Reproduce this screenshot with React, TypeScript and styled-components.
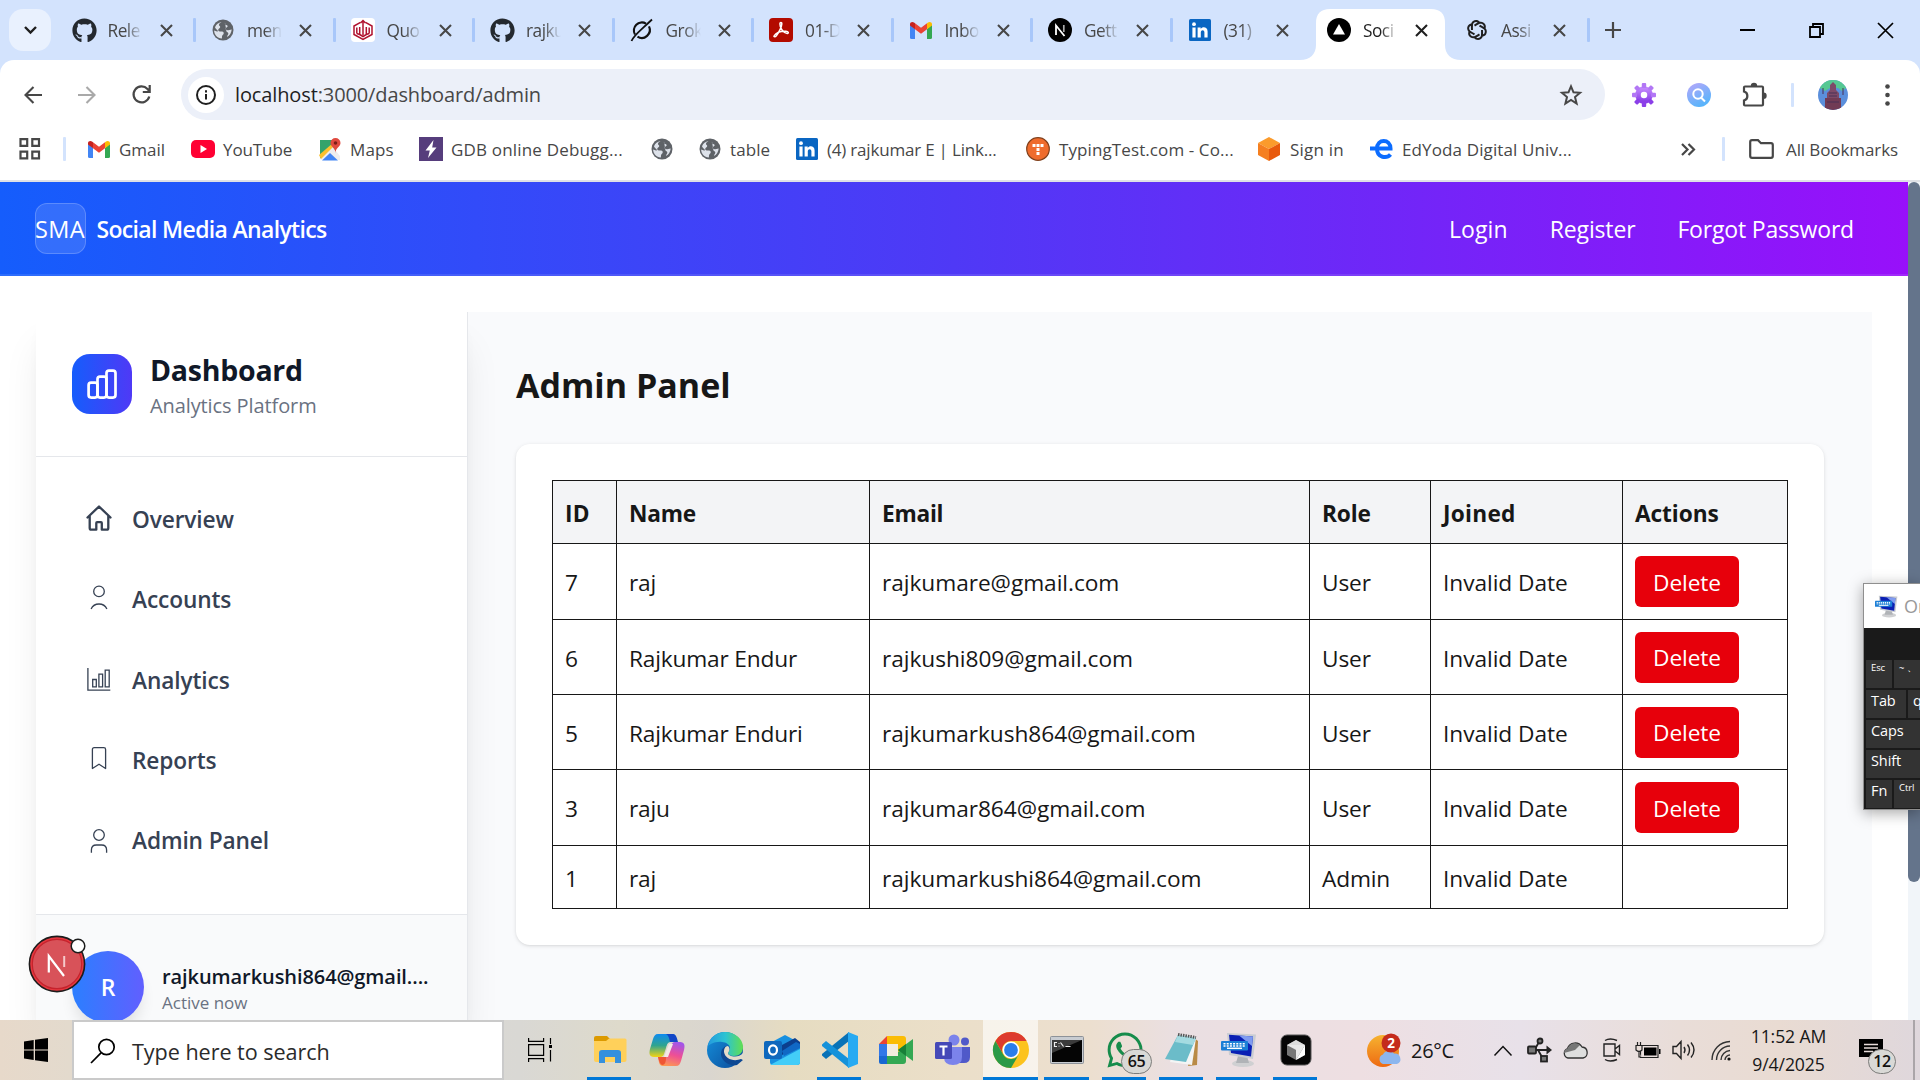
import React from "react";
import styled, { createGlobalStyle, css } from "styled-components";
import { FaGithub, FaWhatsapp } from "react-icons/fa";
import { RiOpenaiLine } from "react-icons/ri";

const GlobalStyle = createGlobalStyle`
  * { box-sizing: border-box; }
  html, body { margin: 0; padding: 0; background: #fff; overflow: hidden; }
  body { font-family: "Open Sans", "Noto Sans", sans-serif; color: #171717; }
  svg { display: block; flex: none; overflow: visible; }
`;

const Screen = styled.div`
  position: relative;
  width: 1920px;
  height: 1080px;
  display: flex;
  flex-direction: column;
  overflow: hidden;
  white-space: nowrap;
`;

/* ---------- Browser window ---------- */

const TabStrip = styled.div`
  flex: none;
  height: 60px;
  padding-left: 9px;
  display: flex;
  align-items: center;
  background: #d3e3fd;
`;

const TabSearch = styled.div`
  width: 42px;
  height: 42px;
  margin-right: 4.5px;
  border-radius: 14px;
  background: #e9f1fe;
  display: grid;
  place-items: center;
`;

const Tab = styled.div<{ $active?: boolean; $sep?: boolean }>`
  position: relative;
  width: ${(p) => (p.$active ? 138 : 139.5)}px;
  height: 60px;
  padding-left: 16px;
  display: flex;
  align-items: center;
  flex: none;
  ${(p) =>
    p.$sep &&
    css`
      &::after {
        content: "";
        position: absolute;
        right: -1px;
        top: 18px;
        width: 3px;
        height: 24px;
        border-radius: 1px;
        background: #a8c7fa;
      }
    `}
`;

const ActiveShape = styled.svg`
  position: absolute;
  left: -11px;
  top: 9px;
`;

const Favicon = styled.div`
  position: relative;
  width: 24px;
  height: 24px;
  display: grid;
  place-items: center;
`;

const TabTitle = styled.div<{ $active?: boolean }>`
  position: relative;
  width: 35px;
  margin: 2px 17px 0 12px;
  font-size: 17.3px;
  letter-spacing: -0.5px;
  line-height: 26px;
  color: ${(p) => (p.$active ? "#1f1f1f" : "#474747")};
  mask-image: linear-gradient(to right, #000 50%, transparent 100%);
`;

const CloseIcon = styled.svg`
  position: relative;
`;

const WindowButton = styled.div<{ $ml?: number }>`
  width: 24px;
  height: 24px;
  margin-left: ${(p) => p.$ml ?? 0}px;
  display: grid;
  place-items: center;
`;

const ToolbarBack = styled.div`
  flex: none;
  background: #d3e3fd;
`;

const Toolbar = styled.div`
  height: 69px;
  padding-left: 15px;
  display: flex;
  align-items: center;
  background: #fff;
  border-radius: 14px 14px 0 0;
`;

const ToolButton = styled.div<{ $w: number; $pl?: number }>`
  width: ${(p) => p.$w}px;
  height: 36px;
  flex: none;
  padding-left: ${(p) => p.$pl ?? 0}px;
  display: grid;
  place-items: center;
`;

const Omnibox = styled.div`
  flex: none;
  width: 1424px;
  height: 51px;
  margin: 0 21px 0 4px;
  padding: 0 22px 0 7px;
  border-radius: 26px;
  background: #ecf0f9;
  display: flex;
  align-items: center;
`;

const InfoBadge = styled.div`
  width: 36px;
  height: 36px;
  border-radius: 50%;
  background: #fff;
  display: grid;
  place-items: center;
`;

const Url = styled.div`
  flex: 1;
  margin-left: 11px;
  padding-bottom: 1px;
  font-size: 20px;
  letter-spacing: -0.12px;
  color: #474747;
  span { color: #1f1f1f; }
`;

const Divider = styled.div<{ $m: string }>`
  flex: none;
  width: 3px;
  height: 24px;
  margin: ${(p) => p.$m};
  border-radius: 1px;
  background: #d3e3fd;
`;

const Bookmarks = styled.div`
  flex: none;
  height: 53px;
  padding: 0 0 11px 18px;
  display: flex;
  align-items: center;
  background: #fff;
  border-bottom: 2px solid #dfe1e6;
`;

const Bookmark = styled.div<{ $w?: number; $ls?: number; $gap?: number }>`
  width: ${(p) => (p.$w ? `${p.$w}px` : "auto")};
  display: flex;
  align-items: center;
  gap: ${(p) => p.$gap ?? 9}px;
  font-size: 17px;
  letter-spacing: ${(p) => p.$ls ?? -0.1}px;
  color: #474747;
  flex: none;
`;

/* ---------- Web page ---------- */

const Viewport = styled.div`
  flex: 1;
  min-height: 0;
  display: flex;
  overflow: hidden;
`;

const Page = styled.div`
  width: 1908px;
  display: flex;
  flex-direction: column;
`;

const ScrollTrack = styled.div`
  width: 12px;
  background: #f1f5f9;
`;

const ScrollThumb = styled.div`
  height: 700px;
  border-radius: 6px;
  background: #64748b;
`;

const NavBar = styled.header`
  flex: none;
  height: 94px;
  padding: 0 54px 2px 34.5px;
  display: flex;
  align-items: center;
  color: #fff;
  font-size: 23px;
  background: linear-gradient(to right, #155dfc, #4f39f6 50%, #9810fa);
  box-shadow: inset 0 -2px 0 rgba(255, 255, 255, 0.1);
`;

const BrandMark = styled.div`
  width: 51px;
  height: 51px;
  padding-top: 2px;
  display: flex;
  align-items: center;
  justify-content: center;
  border-radius: 12px;
  border: 1.5px solid rgba(255, 255, 255, 0.2);
  background: rgba(255, 255, 255, 0.12);
  font-size: 23.500px;
  letter-spacing: 0.4px;
`;

const BrandName = styled.div`
  flex: 1;
  margin-left: 11px;
  padding-top: 2px;
  font-weight: 600;
  letter-spacing: -0.67px;
`;

const NavLink = styled.a<{ $ls: number }>`
  margin-left: 42px;
  padding-top: 2px;
  letter-spacing: ${(p) => p.$ls}px;
`;

const Columns = styled.div`
  flex: 1;
  min-height: 0;
  padding: 36px 37px 0 36px;
  display: flex;
`;

const Sidebar = styled.aside`
  position: relative;
  flex: none;
  width: 432px;
  display: flex;
  flex-direction: column;
  background: #fff;
  border-right: 1px solid #e5e7eb;
  box-shadow: 0 30px 37px -7px rgba(0, 0, 0, 0.1), 0 12px 15px -9px rgba(0, 0, 0, 0.1);
`;

const SideHeader = styled.div`
  flex: none;
  height: 145px;
  padding: 0 36px;
  display: flex;
  align-items: center;
  gap: 18px;
  border-bottom: 1px solid #e5e7eb;
`;

const LogoTile = styled.div`
  width: 60px;
  height: 60px;
  border-radius: 18px;
  background: linear-gradient(to right, #155dfc, #4f39f6);
`;

const Stack = styled.div`
  display: flex;
  flex-direction: column;
`;

const SideTitle = styled.div`
  padding-top: 2px;
  font-size: 28.5px;
  font-weight: 700;
  line-height: 40px;
  letter-spacing: -0.25px;
  color: #101828;
`;

const SideSub = styled.div`
  font-size: 20px;
  line-height: 31px;
  letter-spacing: -0.1px;
  color: #6a7282;
`;

const SideNav = styled.nav`
  flex: none;
  height: 457px;
  padding: 27px 36px 0 48px;
  display: flex;
  flex-direction: column;
  gap: 12.25px;
`;

const SideLink = styled.a`
  height: 68px;
  flex: none;
  display: flex;
  align-items: center;
  gap: 18px;
  font-size: 22.7px;
  font-weight: 600;
  letter-spacing: -0.12px;
  color: #364153;
  span { padding-top: 3px; }
`;

const Account = styled.div`
  flex: 1;
  padding: 36px 36px 0;
  display: flex;
  gap: 18px;
  background: #f9fafb;
  border-top: 1px solid #e5e7eb;
`;

const Avatar = styled.div`
  width: 72px;
  height: 72px;
  flex: none;
  border-radius: 50%;
  display: grid;
  place-items: center;
  color: #fff;
  font-size: 23px;
  font-weight: 600;
  background: linear-gradient(to right, #2b7fff, #615fff);
  box-shadow: 0 12px 16px -4px rgba(0, 0, 0, 0.12);
`;

const AccountMail = styled.div`
  margin-top: 10px;
  font-size: 20px;
  font-weight: 600;
  line-height: 31px;
  letter-spacing: -0.08px;
  color: #101828;
`;

const AccountState = styled.div`
  font-size: 17px;
  line-height: 22px;
  letter-spacing: 0;
  color: #6a7282;
`;

const Main = styled.main`
  flex: 1;
  padding: 48px;
  background: #f9fafc;
`;

const Heading = styled.h1`
  height: 84px;
  margin: 0;
  font-size: 34px;
  line-height: 51px;
  font-weight: 700;
  letter-spacing: 0;
`;

const Card = styled.section`
  height: 501px;
  padding: 36px;
  border-radius: 14px;
  background: #fff;
  box-shadow: 0 1px 4px rgba(0, 0, 0, 0.1), 0 1px 3px -1px rgba(0, 0, 0, 0.1);
`;

const Table = styled.table`
  width: 1235px;
  table-layout: fixed;
  border-collapse: collapse;
  font-size: 22.7px;
`;

const Col = styled.col<{ $w: number }>`
  width: ${(p) => p.$w}px;
`;

const Row = styled.tr<{ $h: number }>`
  height: ${(p) => p.$h}px;
`;

const cell = css<{ $ls?: number }>`
  border: 1px solid #171717;
  text-align: left;
  vertical-align: middle;
  line-height: 36px;
  letter-spacing: ${(p) => p.$ls ?? -0.05}px;
`;

const Th = styled.th<{ $ls?: number }>`
  ${cell}
  padding: 4px 0 0 12px;
  background: #f3f4f6;
  font-weight: 700;
`;

const Td = styled.td<{ $ls?: number }>`
  ${cell}
  padding: 3px 0 0 12px;
`;

const ActionCell = styled.td`
  ${cell}
  padding: 0 0 0 12px;
`;

const DeleteButton = styled.button`
  display: block;
  width: 104px;
  height: 51px;
  padding: 2px 0 0;
  border: 0;
  border-radius: 6px;
  background: #e7000b;
  color: #fff;
  font: inherit;
  letter-spacing: -0.1px;
`;

/* ---------- Floating overlays ---------- */

const DevBadge = styled.svg`
  position: absolute;
  left: 27px;
  top: 932px;
`;

const Keyboard = styled.div`
  position: absolute;
  left: 1863px;
  top: 583px;
  width: 57px;
  height: 227px;
  border: 1px solid #8f8f8f;
  border-right: 0;
  background: #1a1a1a;
  box-shadow: 0 3px 14px rgba(0, 0, 0, 0.35);
`;

const KeyTitle = styled.div`
  height: 44px;
  padding-left: 11px;
  display: flex;
  align-items: center;
  gap: 6px;
  background: #fff;
  color: #999;
  font-size: 18px;
  overflow: hidden;
`;

const KeyRows = styled.div`
  padding: 32px 0 0 2px;
  display: grid;
  gap: 2px;
`;

const KeyRow = styled.div`
  display: flex;
  gap: 2px;
  height: 28px;
`;

const Key = styled.div<{ $w?: number; $small?: boolean }>`
  ${(p) => (p.$w ? `width: ${p.$w}px; flex: none;` : "flex: 1;")}
  padding-left: 5px;
  background: #333;
  color: #fff;
  font-size: ${(p) => (p.$small ? 9.5 : 14.5)}px;
  line-height: ${(p) => (p.$small ? 15 : 22)}px;
  letter-spacing: -0.1px;
`;

/* ---------- Taskbar ---------- */

const Taskbar = styled.footer`
  flex: none;
  position: relative;
  height: 60px;
  display: flex;
  align-items: stretch;
  background: linear-gradient(
    to right,
    #e7d9ca 0,
    #e3dacd 70px,
    #d9d8d4 520px,
    #dedacb 620px,
    #dad6cf 710px,
    #e6dcc1 790px,
    #ebdfc9 950px,
    #ecdfcf 1090px,
    #eadfe2 1180px,
    #eedfe2 1360px,
    #e8e1e9 1520px,
    #e9ddd8 1680px,
    #e9dbd2 1780px,
    #dfd7dc 1920px
  );
`;

const Start = styled.div`
  width: 72px;
  display: grid;
  place-items: center;
`;

const SearchBox = styled.div`
  width: 432px;
  padding: 2px 0 0 16px;
  display: flex;
  align-items: center;
  gap: 16px;
  border: 2px solid #cacaca;
  background: #fff;
  font-size: 21.6px;
  letter-spacing: -0.05px;
  color: #2b2b2b;
`;

const Slot = styled.div<{ $w: number; $run?: boolean; $on?: boolean; $pr?: number }>`
  position: relative;
  width: ${(p) => p.$w}px;
  flex: none;
  padding-right: ${(p) => p.$pr ?? 0}px;
  display: grid;
  place-items: center;
  background: ${(p) => (p.$on ? "rgba(255,255,255,.62)" : "transparent")};
  ${(p) =>
    p.$run &&
    css`
      &::after {
        content: "";
        position: absolute;
        left: ${p.$on ? 0 : 6}px;
        right: ${p.$on ? 0 : 7}px;
        bottom: 0;
        height: 3px;
        background: #0078d7;
      }
    `}
`;

const CountBadge = styled.div<{ $x: number; $w: number }>`
  position: absolute;
  left: ${(p) => p.$x}px;
  top: 29px;
  width: ${(p) => p.$w}px;
  height: 25px;
  border-radius: 13px;
  border: 1.5px solid #7c7c7a;
  background: #d9d9d6;
  color: #111;
  font-size: 16px;
  font-weight: 600;
  line-height: 22px;
  text-align: center;
  letter-spacing: -0.3px;
`;

const Temperature = styled.div`
  width: 80px;
  padding: 1px 0 0 7px;
  align-self: center;
  font-size: 20px;
  letter-spacing: -0.3px;
`;

const Clock = styled.div`
  width: 94px;
  display: flex;
  flex-direction: column;
  align-items: center;
  justify-content: center;
  font-size: 17.6px;
  line-height: 27.5px;
  letter-spacing: -0.1px;
  padding: 1px 0 0 3px;
`;

const DesktopEdge = styled.div`
  width: 2px;
  margin-left: auto;
  margin-right: 5px;
  background: #aaa5a8;
`;

/* ---------- Drawings ---------- */

const Globe = () => (
  <svg width="22" height="22" viewBox="0 0 22 22">
    <circle cx="11" cy="11" r="10.5" fill="#5f6368" />
    <path d="M11.500 2.500C10.500 4 9.500 4 9.500 5.300c0 1.400 2.200.9 2.200 2.200 0 1-1.200 1.200-2.700 1.300-1 .1-1 1.500.2 1.700 1.700.3 3.800-.1 4.600 1.200.8 1.600-.2 2.700-1.500 3.500-.9.700-.4 2.300-1.900 3.900C6 18.900 2.600 15.500 2.400 11c1.400 1.400 2.700 1.900 4.600 2.200 1.500.2 1.300-1.200.5-1.900C6.200 10.300 4.600 9.800 3.100 8 4.400 4.700 7.600 2.500 11.500 2.500z" fill="#5f6368" />
    <path d="M13.500 3C12 4.500 11 4.200 11 5.500c0 1.300 2 1 2 2.500 0 1.300-1.800 1.300-3 1.400-.8.100 3.700-.2 5 1.600 1 1.500 0 3.200-1.200 4-.9.600-.6 2.600-1.600 4.200 4-.7 7.200-4 7.200-8.200 0-3.700-2.400-6.800-5.900-8z" fill="#5f6368" />
    <path d="M9.500 3c-1 1.200-2.700 1.300-2.500 3 .1 1.200 1.400.9 1.200 2.200-.2 1.400-2 1.300-2 2.800 0 1.300 1.300 1.500 2.700 1.600 1.700.1 2.900.2 2.800 1.800-.1 1.300-1.500 1.300-1.700 2.800-.1.900.1 1.500-.2 2.200C5.300 19 2.200 15.700 2.100 11.400L5 12.500c1.200.3 1-1 .2-1.600C4.400 10.300 3.500 9.500 3 8.200 4 5.500 6.500 3.500 9.500 3zM13 3.500c-.5 1.500.5 2.300 1.800 2.800 1.600.6.700 1.700-.3 2.200-1.300.7-1.200 2.200.3 2.600 1.500.3 2.800-.5 4.900-.7-.3 3.300-2 6-4.700 7.500.2-1.500 1.500-2.200 1.300-3.600-.2-1.300-1.700-1-1.900-2" fill="#e8edf5" opacity=".92" />
  </svg>
);

const Gmail = () => (
  <svg width="22" height="17" viewBox="0 0 22 17">
    <path d="M0 2.500V15.500Q0 17 1.500 17H5V7z" fill="#4285f4" />
    <path d="M22 2.500V15.500Q22 17 20.500 17H17V7z" fill="#34a853" />
    <path d="M17 1.200V7.200l5-3.700V2.300C22 .2 19.600-.7 18 .5z" fill="#fbbc04" />
    <path d="M5 7.300V1.200l6 4.600 6-4.600v6.100l-6 4.500z" fill="#ea4335" />
    <path d="M0 2.300V3.600l5 3.700V1.200L4 .5C2.400-.7 0 .2 0 2.300z" fill="#c5221f" />
  </svg>
);

const LinkedIn = () => (
  <svg width="22" height="22" viewBox="0 0 22 22">
    <rect width="22" height="22" rx="1.500" fill="#0a66c2" />
    <circle cx="5" cy="5.200" r="1.900" fill="#fff" />
    <path d="M3.400 8.500h3.200v10H3.400zM8.600 8.500h3.100v1.400c1.500-2.500 6.900-2.400 6.900 2.700v5.900h-3.200v-5.200c0-3-3.600-2.600-3.600 0v5.200H8.600z" fill="#fff" />
  </svg>
);

const Wings = () => (
  <svg width="24" height="24" viewBox="0 0 24 24">
    <rect width="24" height="24" rx="4" fill="#fff" />
    <g fill="none" stroke="#b0122f" strokeWidth="1.500">
      <path d="M9.500 4.300 3 8v8.500l9 5 9-5V8l-6.500-3.700" />
      <path d="M12 2.500V17M8.700 9v7.500M15.300 9v7.500M5.800 9.500v6M18.200 9.500v6M5.800 15.500l2.900 1M8.700 16.500l3.300 2 3.300-2 2.900-1M9.500 5 12 2.500 14.500 5" />
    </g>
  </svg>
);

const Grok = () => (
  <svg width="24" height="24" viewBox="0 0 24 24" fill="none" stroke="#111" strokeWidth="2.200">
    <path d="M16 5.600A8 8 0 0 0 5 16.500M7.500 18.600A8 8 0 0 0 19 8.400" />
    <path d="M1.500 23C4 17 9 14 22 1.500" strokeWidth="1.800" />
  </svg>
);

const Acrobat = () => (
  <svg width="24" height="24" viewBox="0 0 24 24">
    <rect width="24" height="24" rx="4" fill="#b30b00" />
    <path d="M5 18c2-3.500 5.500-5 12-4.800 2.500.1 3 2 1.300 2.200-3 .1-7.600-4.600-7.400-9.500.1-2 2-2 1.900 0C12.500 9.500 10 14 7.500 17.600 6.300 19.300 4.600 19 5 18z" fill="none" stroke="#fff" strokeWidth="1.500" />
  </svg>
);

const NextIcon = () => (
  <svg width="24" height="24" viewBox="0 0 24 24">
    <circle cx="12" cy="12" r="12" fill="#000" />
    <path d="M8 17V7.500L16.500 18" stroke="#fff" strokeWidth="1.800" fill="none" />
    <path d="M15.800 7v7" stroke="#aaa" strokeWidth="1.700" />
  </svg>
);

const VercelIcon = () => (
  <svg width="24" height="24" viewBox="0 0 24 24">
    <circle cx="12" cy="12" r="12" fill="#000" />
    <path d="M12 6 18 16.500H6z" fill="#fff" />
  </svg>
);

const Cross = ({ active }: { active?: boolean }) => (
  <CloseIcon width="13" height="13" viewBox="0 0 13 13" stroke={active ? "#1f1f1f" : "#474747"} strokeWidth="2.100">
    <path d="M1 1 12 12M12 1 1 12" />
  </CloseIcon>
);

const Monitor = ({ size }: { size: number }) => (
  <svg width={size} height={size} viewBox="0 0 36 36">
    <ellipse cx="22" cy="31.500" rx="11" ry="3.600" fill="#cfd0d2" />
    <path d="M17 24h9l2 7H15z" fill="#b0b3b7" />
    <path d="M6 1 35 2.500 32 27 8 23z" fill="#c9ccd2" />
    <path d="M8 2.700 32 4.500 30 24.500 10 21z" fill="#0a1fb4" />
    <path d="M18 3.500 32 4.500 31 14z" fill="#7f9bf0" />
    <rect x="0" y="9" width="27" height="9.500" rx="1" fill="#1c7fd6" />
    <path d="M2.500 11.700h22M2.500 13.900h22" stroke="#fff" strokeWidth="1.500" strokeDasharray="2 1.200" />
    <path d="M6 16.300h15" stroke="#fff" strokeWidth="1.400" />
  </svg>
);

const sideIcons: Record<string, React.ReactNode> = {
  home: (
    <g strokeWidth="2.300" strokeLinecap="round" strokeLinejoin="round">
      <path d="M3.500 14.500 15 3.500 26.500 14.500M5.700 12.800V25q0 1.700 1.700 1.700H12.300V20q0-.8.8-.8H17q.8 0 .8.8v6.700H22.700Q24.300 26.700 24.300 25V12.800" />
    </g>
  ),
  person: (
    <g strokeWidth="1.300">
      <circle cx="15" cy="8.400" r="5.300" />
      <path d="M7.100 26C8.700 22.500 11.500 21 15 21s6.300 1.500 7.900 5" />
    </g>
  ),
  chart: (
    <g strokeWidth="1.300">
      <path d="M3.900 4v22.200H26.300" />
      <path d="M8.700 15.500h3.600v7.300H8.700zM14.900 10.200h3.700v12.600h-3.700zM21.200 6.200h4v16.600h-4z" />
    </g>
  ),
  bookmark: (
    <g strokeWidth="1.300" strokeLinejoin="round">
      <path d="M8.400 24.500V5.500Q8.400 3.700 10.200 3.700h9.600q1.800 0 1.800 1.800v19L15 20.200z" />
    </g>
  ),
  admin: (
    <g strokeWidth="1.300">
      <circle cx="15" cy="11" r="5.300" />
      <path d="M7.400 28.700V26q0-5 5-5h5.200q5 0 5 5v2.700" />
    </g>
  ),
};

/* ---------- Data ---------- */

const tabs: { title: string; icon: React.ReactNode; active?: boolean; sep?: boolean }[] = [
  { title: "Rele", icon: <FaGithub size={25} color="#24292f" />, sep: true },
  { title: "men", icon: <Globe />, sep: true },
  { title: "Quo", icon: <Wings />, sep: true },
  { title: "rajku", icon: <FaGithub size={25} color="#24292f" />, sep: true },
  { title: "Grok", icon: <Grok />, sep: true },
  { title: "01-D", icon: <Acrobat />, sep: true },
  { title: "Inbo", icon: <Gmail />, sep: true },
  { title: "Gett", icon: <NextIcon />, sep: true },
  { title: "(31)", icon: <LinkedIn /> },
  { title: "Soci", icon: <VercelIcon />, active: true },
  { title: "Assi", icon: <RiOpenaiLine size={24} color="#1f1f1f" />, sep: true },
];

const links = [
  ["home", "Overview"],
  ["person", "Accounts"],
  ["chart", "Analytics"],
  ["bookmark", "Reports"],
  ["admin", "Admin Panel"],
];

const headers: [string, number][] = [
  ["ID", 0.3],
  ["Name", -0.25],
  ["Email", -0.25],
  ["Role", -0.15],
  ["Joined", 0.25],
  ["Actions", -0.1],
];

const users = [
  { id: 7, name: "raj", email: "rajkumare@gmail.com", role: "User", h: 76 },
  { id: 6, name: "Rajkumar Endur", email: "rajkushi809@gmail.com", role: "User", h: 75 },
  { id: 5, name: "Rajkumar Enduri", email: "rajkumarkush864@gmail.com", role: "User", h: 75 },
  { id: 3, name: "raju", email: "rajkumar864@gmail.com", role: "User", h: 76 },
  { id: 1, name: "raj", email: "rajkumarkushi864@gmail.com", role: "Admin", h: 63 },
];

const Browser = () => (
  <>
    <TabStrip>
      <TabSearch>
        <svg width="13" height="8" viewBox="0 0 13 8" fill="none" stroke="#1f1f1f" strokeWidth="2.400"><path d="M1 1l5.500 5.500L12 1" /></svg>
      </TabSearch>
      {tabs.map((t, i) => (
        <Tab key={i} $active={t.active} $sep={t.sep}>
          {t.active && (
            <ActiveShape width="161" height="51" viewBox="0 0 161 51" fill="#fff">
              <path d="M0 51C10 51 16 45 16 36V14Q16 0 30 0H131Q145 0 145 14V36C145 45 151 51 161 51z" />
            </ActiveShape>
          )}
          <Favicon>{t.icon}</Favicon>
          <TabTitle $active={t.active}>{t.title}</TabTitle>
          <Cross active={t.active} />
        </Tab>
      ))}
      <WindowButton $ml={12}>
        <svg width="16" height="16" viewBox="0 0 16 16" stroke="#474747" strokeWidth="2.200"><path d="M8 0v16M0 8h16" /></svg>
      </WindowButton>
      <WindowButton $ml={111}>
        <svg width="15" height="2" viewBox="0 0 15 2"><path d="M0 0h15v2H0z" /></svg>
      </WindowButton>
      <WindowButton $ml={45}>
        <svg width="15" height="15" viewBox="0 0 15 15" fill="none" stroke="#000" strokeWidth="1.800"><path d="M1 4h10v10H1zM4 4V1h10v10h-3" /></svg>
      </WindowButton>
      <WindowButton $ml={45}>
        <svg width="15" height="15" viewBox="0 0 15 15" stroke="#000" strokeWidth="1.700"><path d="M0 0 15 15M15 0 0 15" /></svg>
      </WindowButton>
    </TabStrip>
    <ToolbarBack>
      <Toolbar>
        <ToolButton $w={36}>
          <svg width="18" height="18" viewBox="0 0 18 18" fill="none" stroke="#474747" strokeWidth="2.100"><path d="M18 9H1.500M9.500 1 1.500 9l8 8" /></svg>
        </ToolButton>
        <ToolButton $w={72}>
          <svg width="18" height="18" viewBox="0 0 18 18" fill="none" stroke="#a9a9a9" strokeWidth="2.100"><path d="M0 9h16.500M8.500 1l8 8-8 8" /></svg>
        </ToolButton>
        <ToolButton $w={36}>
          <svg width="19" height="19" viewBox="0 0 19 19" fill="none" stroke="#474747" strokeWidth="2.200"><path d="M17.300 11.500A8 8 0 1 1 15.500 4L17.500 6.200M17.700 0v7H10.800" /></svg>
        </ToolButton>
        <ToolButton $w={18} />
        <Omnibox>
          <InfoBadge>
            <svg width="20" height="20" viewBox="0 0 20 20" fill="none" stroke="#1f1f1f" strokeWidth="2"><circle cx="10" cy="10" r="9" /><path d="M10 9v5.500M10 5.200v2.200" /></svg>
          </InfoBadge>
          <Url><span>localhost</span>:3000/dashboard/admin</Url>
          <svg width="24" height="24" viewBox="0 0 24 24" fill="none" stroke="#474747" strokeWidth="2"><path d="M12 3.300 14.500 9.300 21 9.800 16 14 17.600 20.500 12 17 6.400 20.500 8 14 3 9.800 9.500 9.300z" /></svg>
        </Omnibox>
        <ToolButton $w={36}>
          <svg width="24" height="24" viewBox="-12 -12 24 24">
            <defs><linearGradient id="gear" x1="0" y1="0" x2="0" y2="1"><stop offset="0" stopColor="#c084fc" /><stop offset="1" stopColor="#8b3fe8" /></linearGradient></defs>
            <circle r="6" fill="none" stroke="url(#gear)" strokeWidth="5.500" />
            {[0, 45, 90, 135, 180, 225, 270, 315].map((a) => <rect key={a} x="-2.200" y="-12" width="4.400" height="5" rx="1" fill={a > 90 && a < 270 ? "#8b3fe8" : "#b277f5"} transform={`rotate(${a})`} />)}
          </svg>
        </ToolButton>
        <ToolButton $w={74}>
          <svg width="24" height="24" viewBox="0 0 24 24">
            <defs><linearGradient id="find" x1="0" y1="0" x2=".5" y2="1"><stop offset="0" stopColor="#b9a7fa" /><stop offset="1" stopColor="#58b4fb" /></linearGradient></defs>
            <circle cx="12" cy="12" r="12" fill="url(#find)" />
            <circle cx="11" cy="11" r="4.700" fill="none" stroke="#fff" strokeWidth="2" /><path d="m13.500 14 4.500 4.500" stroke="#fff" strokeWidth="2" />
          </svg>
        </ToolButton>
        <ToolButton $w={36}>
          <svg width="25" height="25" viewBox="0 0 25 25" fill="none" stroke="#474747" strokeWidth="2.200"><path d="M2 5.500Q2 4.500 3 4.500H20Q21 4.500 21 5.500V22.500Q21 23.500 20 23.500H3Q2 23.500 2 22.500V18.500C6.500 17.500 6.500 10.500 2 9.500z" /><path d="M8.800 4a3.200 3.200 0 0 1 6.400 0zM21.500 10.500a3.200 3.200 0 0 1 0 6.400z" fill="#474747" stroke="none" /></svg>
        </ToolButton>
        <Divider $m="0 24px 0 19px" />
        <svg width="30" height="30" viewBox="0 0 30 30">
          <defs><clipPath id="me"><circle cx="15" cy="15" r="15" /></clipPath></defs>
          <g clipPath="url(#me)">
            <path fill="#5b8fdc" d="M0 0h30v30H0z" />
            <path fill="#55c893" d="M2 0h26v8l-4 3-4-3h-8l-5 3-5-3z" />
            <path fill="#7d4a68" d="M12 5l3-3 3 3v5l3 3v6H9v-6l3-3z" />
            <path fill="#713b55" d="M7 18h16v12H7z" />
            <path d="M11 13h8M11 16h8M9 22h12M5 8v6M25 8v7" stroke="#4a3157" />
          </g>
        </svg>
        <ToolButton $w={72} $pl={6}>
          <svg width="5" height="22" viewBox="0 0 5 22" fill="#474747"><circle cx="2.500" cy="2.500" r="2.300" /><circle cx="2.500" cy="11" r="2.300" /><circle cx="2.500" cy="19.500" r="2.300" /></svg>
        </ToolButton>
      </Toolbar>
    </ToolbarBack>
    <Bookmarks>
      <svg width="24" height="22" viewBox="0 0 24 22" fill="none" stroke="#474747" strokeWidth="2.200"><path d="M2.500 1.200h6.700v6.700H2.500zM14.300 1.200H21v6.700h-6.700zM2.500 13.600h6.700v6.700H2.500zM14.300 13.600H21v6.700h-6.700z" /></svg>
      <Divider $m="0 22px 0 21px" />
      <Bookmark $w={103} $ls={0}><Gmail />Gmail</Bookmark>
      <Bookmark $w={127} $gap={8}>
        <svg width="24" height="18" viewBox="0 0 24 18"><rect width="24" height="18" rx="5" fill="#f03" /><path d="M9.500 5v8l6.500-4z" fill="#fff" /></svg>
        YouTube
      </Bookmark>
      <Bookmark $w={101} $ls={0.1}>
        <svg width="23" height="23" viewBox="0 0 23 23">
          <path d="M2 2h16v19H4q-2 0-2-2z" fill="#34a36b" /><path d="M2 21 14 8l8 10v4H4z" fill="#eee" /><path d="M4 22.500 12 15l8 7.500z" fill="#4285f4" /><path d="M1 17 15 5v4L3 21z" fill="#fbc02d" />
          <path d="M17.500 0a5 5 0 0 1 5 5c0 4-5 4.500-5 10 0-5.500-5-6-5-10a5 5 0 0 1 5-5z" fill="#e04a3f" /><circle cx="17.500" cy="5" r="1.800" fill="#7c1f18" />
        </svg>
        Maps
      </Bookmark>
      <Bookmark $w={232} $ls={0.18} $gap={8}>
        <svg width="24" height="24" viewBox="0 0 24 24"><path d="M0 0h24v24H0z" fill="#563d7c" /><path d="M14.500 3 6.500 13.500h4.300L9 21l8.500-10.500h-4.300z" fill="#fff" /></svg>
        GDB online Debugg...
      </Bookmark>
      <Bookmark $w={48}><Globe /></Bookmark>
      <Bookmark $w={97} $ls={0.1}><Globe />table</Bookmark>
      <Bookmark $w={230} $ls={-0.2}><LinkedIn />(4) rajkumar E | Link...</Bookmark>
      <Bookmark $w={231} $ls={0.1}>
        <svg width="24" height="24" viewBox="0 0 24 24"><circle cx="12" cy="12" r="11.300" fill="#ef6c2d" stroke="#80401c" strokeWidth="1.200" /><path d="M6.500 7h3v3h-3zM10.500 7h3v3h-3zM14.500 7h3v3h-3zM10.500 11h3v3h-3zM10.500 15h3v3h-3z" fill="#fff" /></svg>
        TypingTest.com - Co...
      </Bookmark>
      <Bookmark $w={113} $ls={0.2}>
        <svg width="24" height="24" viewBox="0 0 24 24"><path d="M12 0 23 6 12 12 1 6z" fill="#fb9b2c" /><path d="M1 6 12 12V24L1 18z" fill="#f57f20" /><path d="M23 6 12 12V24l11-6z" fill="#e8590c" /></svg>
        Sign in
      </Bookmark>
      <Bookmark $w={311} $ls={0.12}>
        <svg width="23" height="20" viewBox="0 0 23 20" fill="none" stroke="#0b6cff" strokeWidth="4"><path d="M0 9.500H20.500C20.500 -.5 7 -.5 7 9.500 7 19.500 17 19.500 20.500 15.500" /></svg>
        EdYoda Digital Univ...
      </Bookmark>
      <svg width="14" height="13" viewBox="0 0 14 13" fill="none" stroke="#474747" strokeWidth="2.200"><path d="M1 1l5.500 5.500L1 12M7.500 1 13 6.500 7.500 12" /></svg>
      <Divider $m="0 24px 0 27px" />
      <Bookmark $gap={12}>
        <svg width="25" height="20" viewBox="0 0 25 20" fill="none" stroke="#474747" strokeWidth="2.200"><path d="M1.200 3Q1.200 1.200 3 1.200H9L12 4.200H22Q23.800 4.200 23.800 6V17Q23.800 18.800 22 18.800H3Q1.200 18.800 1.200 17z" /></svg>
        <span>All Bookmarks</span>
      </Bookmark>
    </Bookmarks>
  </>
);

const Dashboard = () => (
  <Viewport>
    <Page>
      <NavBar>
        <BrandMark>SMA</BrandMark>
        <BrandName>Social Media Analytics</BrandName>
        <NavLink $ls={0.1}>Login</NavLink>
        <NavLink $ls={-0.15}>Register</NavLink>
        <NavLink $ls={-0.18}>Forgot Password</NavLink>
      </NavBar>
      <Columns>
        <Sidebar>
          <SideHeader>
            <LogoTile>
              <svg width="60" height="60" viewBox="0 0 60 60" fill="none" stroke="#fff" strokeWidth="2.700">
                <rect x="16.600" y="28.600" width="8.900" height="15" rx="2.500" />
                <rect x="25.500" y="22.600" width="9" height="21" rx="2.500" />
                <rect x="34.500" y="16.600" width="9" height="27" rx="2.500" />
              </svg>
            </LogoTile>
            <Stack>
              <SideTitle>Dashboard</SideTitle>
              <SideSub>Analytics Platform</SideSub>
            </Stack>
          </SideHeader>
          <SideNav>
            {links.map(([icon, label]) => (
              <SideLink key={label}>
                <svg width="30" height="30" viewBox="0 0 30 30" fill="none" stroke="#364153">{sideIcons[icon]}</svg>
                <span>{label}</span>
              </SideLink>
            ))}
          </SideNav>
          <Account>
            <Avatar>R</Avatar>
            <Stack>
              <AccountMail>rajkumarkushi864@gmail....</AccountMail>
              <AccountState>Active now</AccountState>
            </Stack>
          </Account>
        </Sidebar>
        <Main>
          <Heading>Admin Panel</Heading>
          <Card>
            <Table>
              <colgroup>
                {[64, 253, 440, 121, 192, 165].map((w, i) => <Col key={i} $w={w} />)}
              </colgroup>
              <thead>
                <Row $h={63}>
                  {headers.map(([h, ls]) => <Th key={h} $ls={ls}>{h}</Th>)}
                </Row>
              </thead>
              <tbody>
                {users.map((u) => (
                  <Row key={u.id} $h={u.h}>
                    <Td>{u.id}</Td>
                    <Td $ls={-0.18}>{u.name}</Td>
                    <Td>{u.email}</Td>
                    <Td $ls={-0.15}>{u.role}</Td>
                    <Td>Invalid Date</Td>
                    <ActionCell>{u.role === "User" && <DeleteButton>Delete</DeleteButton>}</ActionCell>
                  </Row>
                ))}
              </tbody>
            </Table>
          </Card>
        </Main>
      </Columns>
    </Page>
    <ScrollTrack><ScrollThumb /></ScrollTrack>
  </Viewport>
);

const WindowsTaskbar = () => (
  <Taskbar>
    <Start>
      <svg width="24" height="24" viewBox="0 0 24 24"><path d="M0 3.400 9.700 2v9.400H0zM11 1.800 24 0v11.400H11zM0 12.600h9.700V22L0 20.600zM11 12.600h13V24L11 22.200z" /></svg>
    </Start>
    <SearchBox>
      <svg width="26" height="26" viewBox="0 0 26 26" fill="none" stroke="#000" strokeWidth="1.700"><circle cx="16.500" cy="9" r="7.700" /><path d="M11 14.800 1 25" /></svg>
      Type here to search
    </SearchBox>
    <Slot $w={77} $pr={4}>
      <svg width="25" height="24" viewBox="0 0 25 24" fill="none" stroke="#000" strokeWidth="1.200"><path d="M.6 0v3.400h15V0M.6 6.600h15v10.800H.6zM.6 24v-3.400h15V24M22.500 0v6M22.500 12v11.500" /><path d="M21 7h3v3h-3z" fill="#000" stroke="none" /></svg>
    </Slot>
    <Slot $w={57} $run>
      <svg width="34" height="30" viewBox="0 0 34 30"><path d="M1 3Q1 1 3 1h11l3 3-3 3H1z" fill="#dc9a00" /><path d="M1 6h12l3-2.500h16q1.500 0 1.500 1.500v20q0 2-2 2H3q-2 0-2-2z" fill="#ffd05a" /><path d="M6 28V18q0-3 3-3h16q3 0 3 3v10h-6v-6h-10v6z" fill="#3590dd" /></svg>
    </Slot>
    <Slot $w={58}>
      <svg width="36" height="34" viewBox="0 0 36 34">
        <defs>
          <linearGradient id="cpA" x1="0" y1="0" x2="0" y2="1"><stop offset="0" stopColor="#0e8bf0" /><stop offset=".5" stopColor="#2fa48f" /><stop offset="1" stopColor="#f5d413" /></linearGradient>
          <linearGradient id="cpB" x1=".6" y1="0" x2=".3" y2="1"><stop offset="0" stopColor="#a355e8" /><stop offset=".5" stopColor="#ee4f95" /><stop offset="1" stopColor="#fd9a52" /></linearGradient>
        </defs>
        <path d="M9 1h14c4 0 4 3 5 8h-6c-3 0-4 2-5 6l-2 6c-1 3-3 3-5 3H5c-5 0-5-4-4-8L4 6c1-3 2-5 5-5z" fill="url(#cpA)" />
        <path d="M17 1h7c3 0 4 4 5 8h-8c-1-5-2-7-4-8z" fill="#1146c7" />
        <path d="M27 33H14c-4 0-4-4-5-9h5c4 0 5-2 6-5l2-6c1-3 2-4 4-4h5c5 0 5 4 4 8l-3 11c-1 3-2 5-5 5z" fill="url(#cpB)" />
        <path d="M9 24h8c0 5-1 8-4 8-2-1-3-4-4-8z" fill="#ef5634" />
        <path d="M20 11h4l-5 13h-4z" fill="#f4e8e6" />
      </svg>
    </Slot>
    <Slot $w={57}>
      <svg width="36" height="36" viewBox="0 0 36 36">
        <defs>
          <linearGradient id="edA"><stop offset="0" stopColor="#249bdf" /><stop offset=".5" stopColor="#2cc3d2" /><stop offset="1" stopColor="#62df50" /></linearGradient>
          <linearGradient id="edB" x1="0" y1="0" x2="1" y2=".8"><stop offset="0" stopColor="#1591dc" /><stop offset="1" stopColor="#0c4f9e" /></linearGradient>
        </defs>
        <circle cx="18" cy="18" r="18" fill="url(#edB)" />
        <path d="M1 14C3 5 10 0 18 0c10 0 18 7 18 15 0 6-4 9-9 9-4 0-6-1.500-6-3 0-1 2-2 2-5 0-3-4-6-8-6C8 9 2 13 1 14z" fill="url(#edA)" />
        <path d="M21 21c0 2 3 4 7 4 3 0 5-1 6.500-2L36 28 30 33c-5 1-12-1-15-7-2-4-1-10 4-12 2 1 4 3 2 7z" fill="#0d4893" />
        <path d="M21 14c2 2 2 4 0 7 0 2 3 3.500 7 3.500 3 0 5.500-.8 8-3.500v7l-2-1c-7 3-16 0-17-7 0-3 1-6 4-6z" fill="#e3dbc9" />
      </svg>
    </Slot>
    <Slot $w={58}>
      <svg width="36" height="32" viewBox="0 0 36 32"><path d="M6 9 21 1 36 9v19q0 3-3 3H9q-3 0-3-3z" fill="#1890e0" /><path d="M18 11 31 4l5 4v4L18 21z" fill="#0c3f8e" /><path d="M18 17 32 8l4 2v4L20 22z" fill="#1068c5" /><path d="M6 31 36 15v13q0 3-3 3z" fill="#43cdf8" /><rect y="7" width="18" height="18" rx="2" fill="#0f68bd" /><ellipse cx="9" cy="16" rx="4" ry="4.600" fill="none" stroke="#fff" strokeWidth="2.200" /></svg>
    </Slot>
    <Slot $w={57} $run>
      <svg width="36" height="36" viewBox="0 0 36 36"><path d="M27 0v9L4 27 0 23.500V22z" fill="#0872b7" /><path d="M27 36v-9L4 9 0 12.500V14z" fill="#1592da" /><path d="M26 0 36 4v28l-10 4z" fill="#27aaf2" /></svg>
    </Slot>
    <Slot $w={57} $pr={1}>
      <svg width="34" height="28" viewBox="0 0 34 28"><path d="M0 8h8v12H0z" fill="#3277e8" /><path d="M8 0v8H0z" fill="#ea4335" /><path d="M8 0h16q3 0 3 3v10l-8 3V8H8z" fill="#fbbc04" /><path d="M0 20h8v8H2q-2 0-2-2z" fill="#1967d2" /><path d="M8 20h11v-4l8-4v13q0 3-3 3H8z" fill="#34a853" /><path d="M8 8h11v12H8z" fill="#f2ecdf" /><path d="M19 14 34 3v22z" fill="#34a853" /><path d="M19 14 27 8v12z" fill="#188038" /></svg>
    </Slot>
    <Slot $w={58} $pr={3}>
      <svg width="36" height="32" viewBox="0 0 36 32"><circle cx="19" cy="6" r="5.500" fill="#7b83eb" /><circle cx="30" cy="7.500" r="4" fill="#5059c9" /><path d="M23 13h12v10q0 6-6 6h-6z" fill="#5059c9" /><path d="M9 13h18v10q0 8-9 8t-9-8z" fill="#7b83eb" /><rect y="8" width="17" height="17" rx="1.500" fill="#4549b8" /><path d="M4.500 12.500h8M8.500 12.500v9" stroke="#fff" strokeWidth="2.200" /></svg>
    </Slot>
    <Slot $w={55} $run $on>
      <svg width="36" height="36" viewBox="0 0 36 36"><circle cx="18" cy="18" r="18" fill="#fcc31e" /><path d="M2.400 9A18 18 0 0 1 33.600 9H18a9 9 0 0 0-8 13z" fill="#dd3a2e" /><path d="M2.400 9A18 18 0 0 0 18 36l7.800-13.500A9 9 0 0 1 10.200 22.500z" fill="#2a9a48" /><circle cx="18" cy="18" r="8.500" fill="#fff" /><circle cx="18" cy="18" r="6.900" fill="#2b7de9" /></svg>
    </Slot>
    <Slot $w={58} $run>
      <svg width="34" height="28" viewBox="0 0 34 28"><rect x=".5" y=".5" width="33" height="27" rx="1" fill="#c8ccd1" stroke="#8d9298" /><path d="M2 4h30v22H2z" fill="#050505" /><path d="M2 4h30L2 17z" fill="#3b3b3b" /><path d="M7 6.500H4.500v4H7M9 7v.8M9 9.700v.8M10.500 6.500l3 4M15.500 10.500h5" fill="none" stroke="#eee" strokeWidth="1.200" /></svg>
    </Slot>
    <Slot $w={57} $run>
      <FaWhatsapp size={40} color="#168c4b" />
      <CountBadge $x={25} $w={31}>65</CountBadge>
    </Slot>
    <Slot $w={57} $run>
      <svg width="34" height="34" viewBox="0 0 34 34"><path d="M29 5 33 8l-1 24-9 1z" fill="#b98b46" /><path d="M13 2 31 5 27 32 5 29z" fill="#f3f5f5" /><path d="M13 2 31 5 21 29 0 26z" fill="#6bbcc9" /><path d="M13 2 31 5 28 12 10 9z" fill="#a4dbe1" /><path d="M13 1.500 31 4.500" stroke="#555" strokeWidth="3" strokeDasharray="1.500 1" /></svg>
    </Slot>
    <Slot $w={57} $run><Monitor size={36} /></Slot>
    <Slot $w={57} $run>
      <svg width="30" height="30" viewBox="0 0 30 30"><rect width="30" height="30" rx="6" fill="#050505" stroke="#555" /><path d="M15 5 24 10v10l-9 5-9-5V10z" fill="#777" /><path d="M6 10 15 5l9 5-9 5z" fill="#ddd" /><path d="M24 10v10l-9 5z" fill="#fff" /><path d="M6 10 24 10 15 25V14z" fill="#e9e9e9" /></svg>
    </Slot>
    <Slot $w={40} />
    <Slot $w={40}>
      <svg width="36" height="34" viewBox="0 0 36 34"><defs><linearGradient id="sun" x1="0" y1="0" x2="0" y2="1"><stop offset="0" stopColor="#f6b330" /><stop offset="1" stopColor="#ee6a12" /></linearGradient></defs><circle cx="17" cy="18" r="16" fill="url(#sun)" /><path d="M17 31a5 5 0 0 1 0-9.500 6.500 6.500 0 0 1 11-1 5.500 5.500 0 0 1 3 10.500z" fill="#8cb6ee" /><circle cx="25" cy="10" r="9.500" fill="#c42b1c" /><text x="25" y="15" textAnchor="middle" fontSize="13.500" fontWeight="700" fill="#fff">2</text></svg>
    </Slot>
    <Temperature>26°C</Temperature>
    <Slot $w={37}><svg width="18" height="11" viewBox="0 0 18 11" fill="none" stroke="#111" strokeWidth="1.500"><path d="M.5 10.500 9 1.500l8.500 9" /></svg></Slot>
    <Slot $w={36}><svg width="25" height="26" viewBox="0 0 25 26" fill="none" stroke="#222" strokeWidth="1.800"><path d="M7 13h14M8 12l4-7M11 13l4 7" /><rect x="1" y="9.500" width="8" height="7" rx="1" fill="#777" /><circle cx="13" cy="4" r="2.500" fill="#777" /><rect x="14" y="19" width="6" height="5.500" fill="#777" /><path d="m19.500 8.500 5.500 4.500-5.500 4.500z" fill="#222" stroke="none" /></svg></Slot>
    <Slot $w={36}><svg width="25" height="18" viewBox="0 0 25 18"><path d="M5 17a5 5 0 0 1-.5-9.500A8 8 0 0 1 19 6a5.600 5.600 0 0 1 1 11z" fill="#dedede" stroke="#333" strokeWidth="1.300" /><path d="M1 12a5 5 0 0 1 3.500-4.500A8 8 0 0 1 17 4L12 9z" fill="#777" /></svg></Slot>
    <Slot $w={37}><svg width="18" height="24" viewBox="0 0 18 24" fill="none" stroke="#222" strokeWidth="1.400"><path d="M1 6h11v12H1zM12 11l4.500-3.500v9L12 13M2 2.500Q7 -.5 14 2.500M2 21.500Q7 24.500 14 21.500" /></svg></Slot>
    <Slot $w={35}><svg width="25" height="19" viewBox="0 0 25 19"><path d="M5.500 4.500h17.500v12H5.500z" fill="none" stroke="#222" strokeWidth="1.200" /><path d="M9 6.500h12.500v8H9z" /><path d="M24 8h1.500v5H24z" /><path d="M1 4.500h6V9q-3 3-6 0zM2.500 1v3M5.500 1v3M4 10v6h2" fill="#e9ddd8" stroke="#222" strokeWidth="1.200" /></svg></Slot>
    <Slot $w={37}><svg width="24" height="20" viewBox="0 0 24 20" fill="none" stroke="#222" strokeWidth="1.400"><path d="M1 6.500h3.500L9 1.500v17l-4.500-5H1zM12 7q2 3 0 6M15.500 4.500q4 5.500 0 11M19 2.500q6 7.500 0 15" /></svg></Slot>
    <Slot $w={38}><svg width="20" height="21" viewBox="0 0 20 21" fill="none" stroke="#333" strokeWidth="1.400"><path d="M1 20A18.500 18.500 0 0 1 19 1.500M5.500 20A14 14 0 0 1 19 6M10 20a9.500 9.500 0 0 1 9-9.500M14 20a5 5 0 0 1 5-5" /><circle cx="18" cy="19" r="1.600" fill="#111" stroke="none" /></svg></Slot>
    <Clock><span>11:52 AM</span><span>9/4/2025</span></Clock>
    <Slot $w={74}>
      <svg width="24" height="22" viewBox="0 0 24 22"><path d="M0 0h24v18H17l-4 4v-4H0z" /><path d="M5 5.500h14M5 9h14M5 12.500h9" stroke="#e5dad8" strokeWidth="1.300" /></svg>
      <CountBadge $x={34} $w={28}>12</CountBadge>
    </Slot>
    <DesktopEdge />
  </Taskbar>
);

export default function App() {
  return (
    <Screen>
      <GlobalStyle />
      <Browser />
      <Dashboard />
      <WindowsTaskbar />
      <DevBadge width="62" height="62" viewBox="0 0 62 62">
        <circle cx="30" cy="32" r="27.600" fill="#e5383f" stroke="#1c1c1c" strokeWidth="1.600" />
        <circle cx="30" cy="32" r="24.700" fill="#d85259" stroke="#c6222c" strokeWidth="1.200" />
        <path d="M21.800 40.500V24L37 44" fill="none" stroke="#fff" strokeWidth="2.200" />
        <path d="M37.200 24v11" stroke="#f5c9cb" strokeWidth="2" />
        <circle cx="51" cy="14" r="6.800" fill="#fff" stroke="#1c1c1c" strokeWidth="1.500" />
      </DevBadge>
      <Keyboard>
        <KeyTitle><Monitor size={23} />On</KeyTitle>
        <KeyRows>
          <KeyRow><Key $w={26} $small>Esc</Key><Key $small>~ 、</Key></KeyRow>
          <KeyRow><Key $w={40}>Tab</Key><Key>q</Key></KeyRow>
          <KeyRow><Key>Caps</Key></KeyRow>
          <KeyRow><Key>Shift</Key></KeyRow>
          <KeyRow><Key $w={26}>Fn</Key><Key $small>Ctrl</Key></KeyRow>
        </KeyRows>
      </Keyboard>
    </Screen>
  );
}
